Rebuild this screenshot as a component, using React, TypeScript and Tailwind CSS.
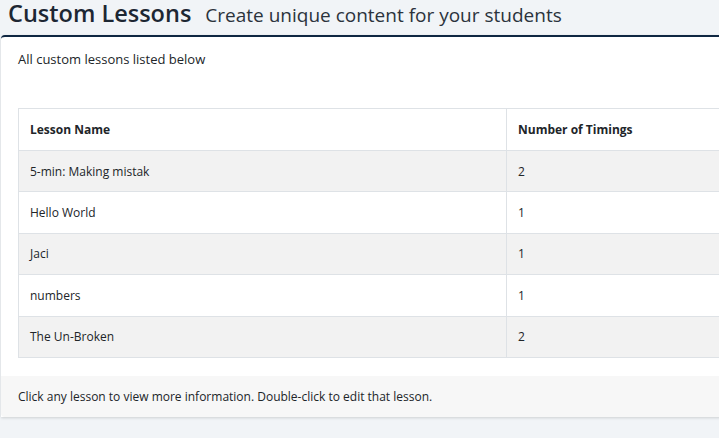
const lessons = [
  { name: '5-min: Making mistak', timings: 2 },
  { name: 'Hello World', timings: 1 },
  { name: 'Jaci', timings: 1 },
  { name: 'numbers', timings: 1 },
  { name: 'The Un-Broken', timings: 2 },
];

export default function App() {
  return (
    <div
      className="h-[438px] w-[719px] overflow-hidden bg-[#f1f4f7] text-[#212529]"
      style={{ fontFamily: '"Open Sans", "Noto Sans", sans-serif' }}
    >
      <div className="flex h-[35px] items-end gap-[14px] px-[8px] pb-[10px]">
        <h1 className="text-[23.5px] font-semibold leading-none text-[#1d2733]">Custom Lessons</h1>
        <span className="text-[19px] leading-none text-[#2b333c]">Create unique content for your students</span>
      </div>

      <div className="ml-px w-[780px] rounded-t-[4px] border-t-2 border-[#0f2742] bg-white shadow-[0_1px_3px_rgba(0,0,0,0.15)]">
        <div className="px-[17px] pt-[13px] pb-[18px]">
          <p className="text-[13px] leading-[18px]">All custom lessons listed below</p>

          <table className="mt-[40px] w-[760px] border-collapse text-[12px]">
            <thead>
              <tr>
                <th className="h-[42px] w-[488px] border border-[#dee2e6] px-[11px] text-left font-bold">Lesson Name</th>
                <th className="h-[42px] border border-[#dee2e6] px-[11px] text-left font-bold">Number of Timings</th>
              </tr>
            </thead>
            <tbody>
              {lessons.map((lesson, i) => (
                <tr key={lesson.name} className={i % 2 === 0 ? 'bg-[#f2f2f2]' : 'bg-white'}>
                  <td className="h-[41.4px] border border-[#dee2e6] px-[11px] pt-px">{lesson.name}</td>
                  <td className="h-[41.4px] border border-[#dee2e6] px-[11px] pt-px">{lesson.timings}</td>
                </tr>
              ))}
            </tbody>
          </table>
        </div>

        <div className="flex h-[41px] items-center rounded-b-[4px] bg-[#f7f7f7] px-[17px] pt-px text-[12px]">
          Click any lesson to view more information. Double-click to edit that lesson.
        </div>
      </div>
    </div>
  );
}
